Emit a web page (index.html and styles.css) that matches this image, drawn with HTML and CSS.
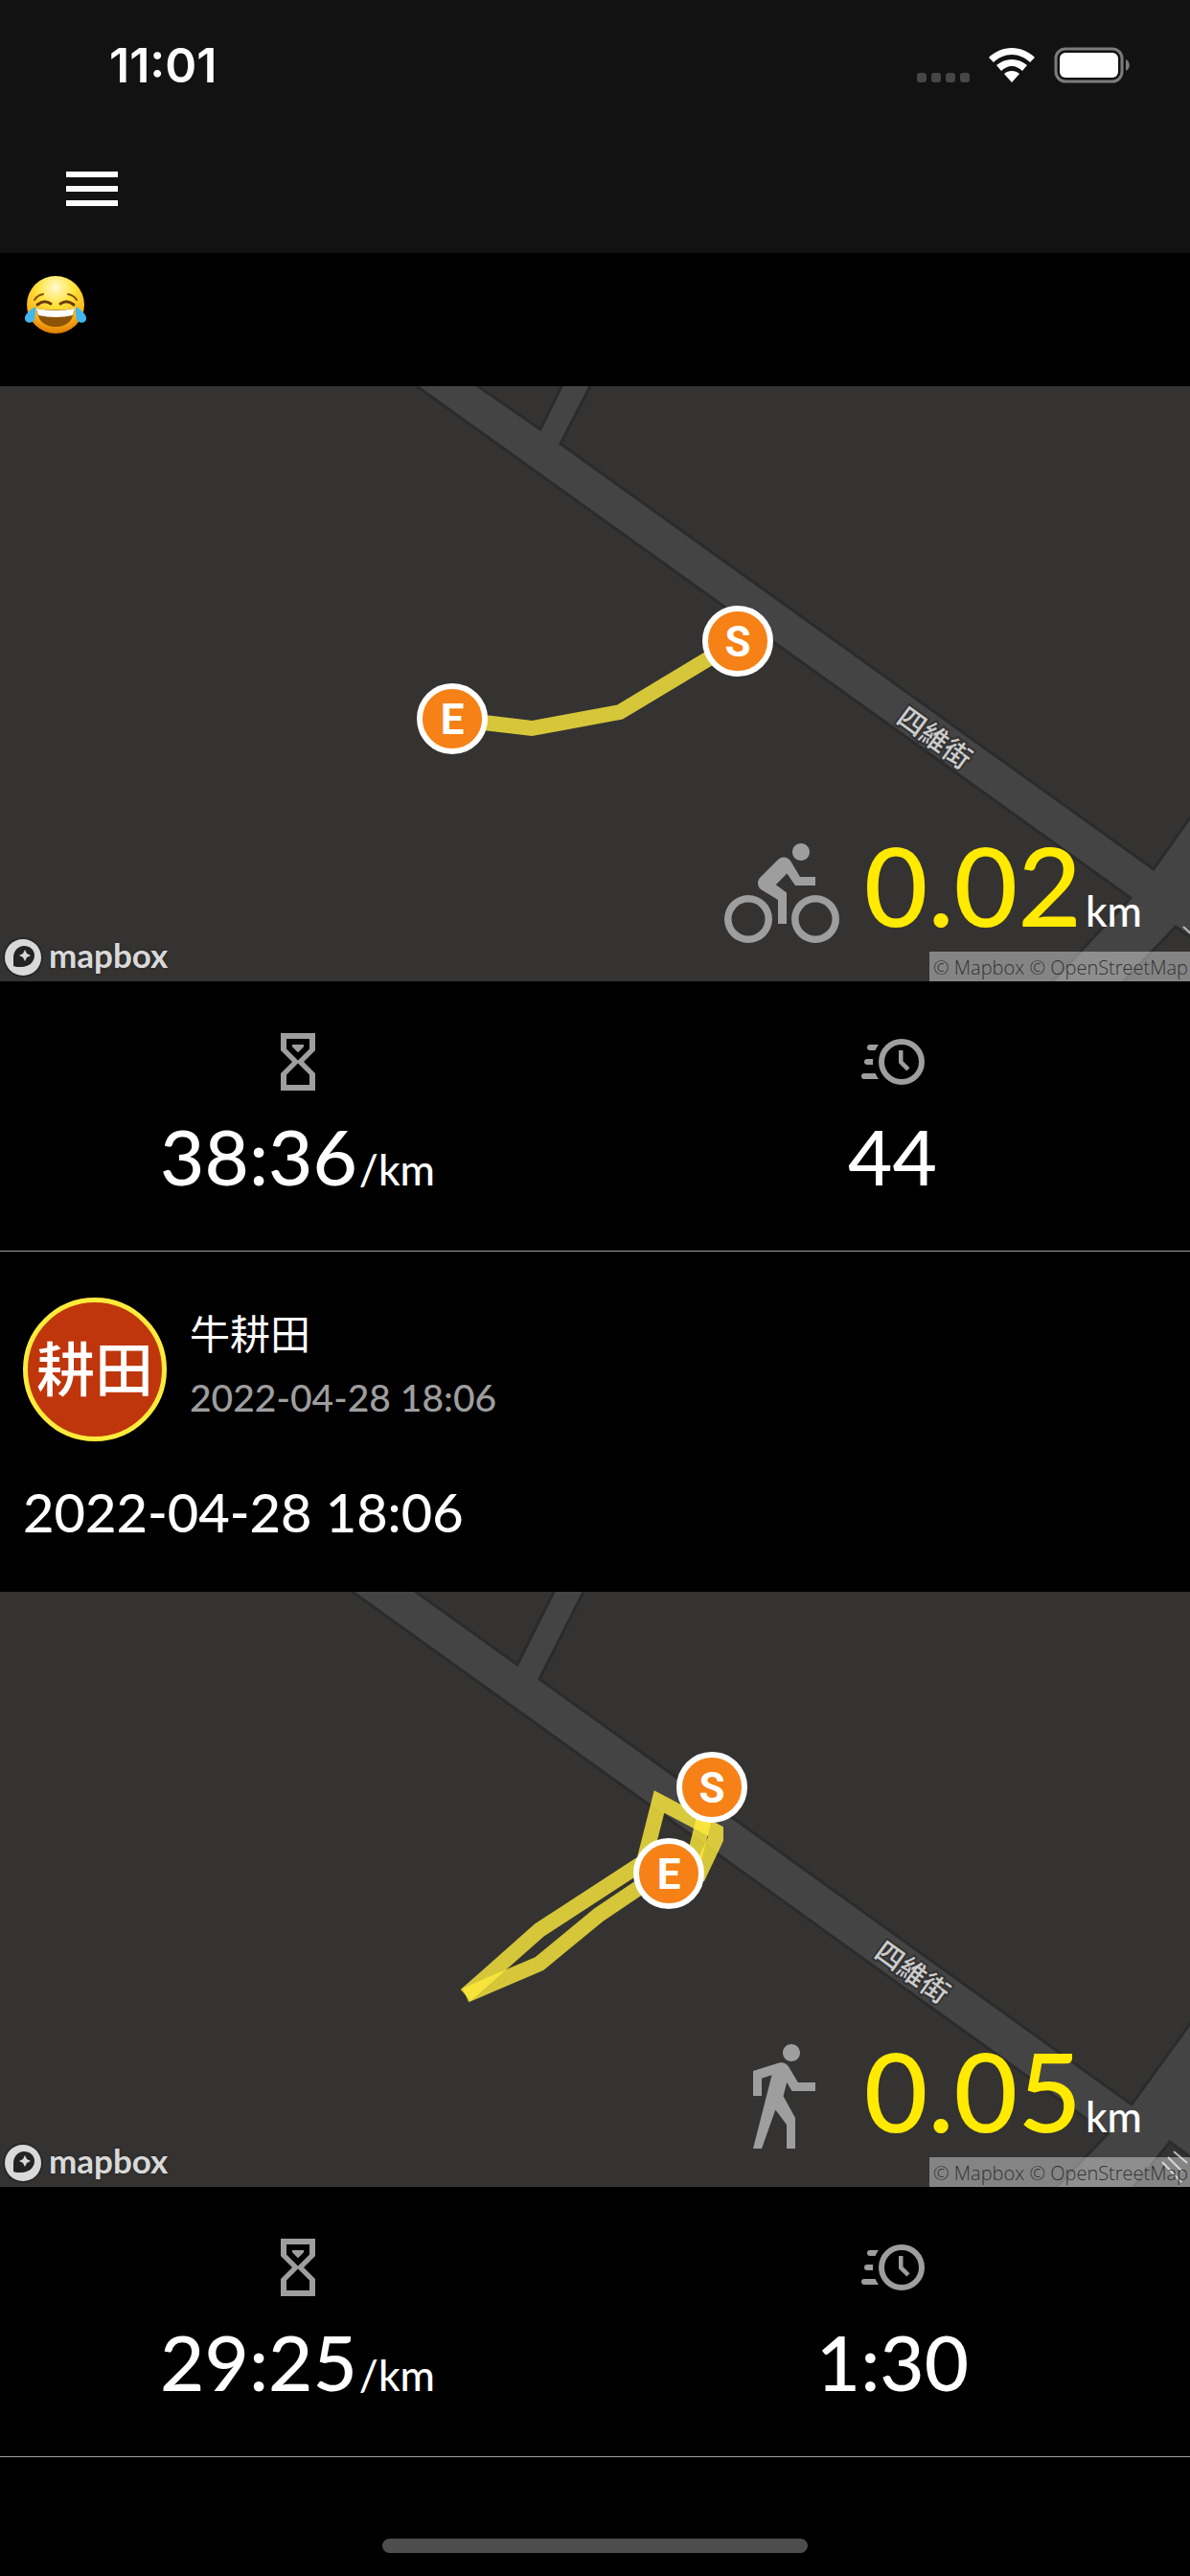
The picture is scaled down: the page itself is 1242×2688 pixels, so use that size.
FILE: index.html
```
<!DOCTYPE html>
<html lang="zh-Hant">
<head>
    <meta charset="UTF-8">
    <meta name="viewport" content="width=device-width, initial-scale=1.0">
    <title>Activities</title>
    <link rel="stylesheet" href="styles.css">
</head>
<body>

<!-- Shared icons -->
<svg class="sprite" aria-hidden="true">
    <symbol id="icon-pace" viewBox="0 0 24 24">
        <path d="M6,2H18V8L14,12L18,16V22H6V16L10,12L6,8V2M16,16.5L12,12.5L8,16.5V20H16V16.5M12,11.5L16,7.5V4H8V7.5L12,11.5M10,6H14V6.75L12,8.75L10,6.75V6Z"/>
    </symbol>
    <symbol id="icon-duration" viewBox="0 0 24 24">
        <path d="M15,4A8,8 0 0,1 23,12A8,8 0 0,1 15,20A8,8 0 0,1 7,12A8,8 0 0,1 15,4M15,6A6,6 0 0,0 9,12A6,6 0 0,0 15,18A6,6 0 0,0 21,12A6,6 0 0,0 15,6M14,8H15.5V11.78L17.83,14.11L16.77,15.17L14,12.4V8M2,18A1,1 0 0,1 1,17A1,1 0 0,1 2,16H5.83C6.14,16.71 6.54,17.38 7,18H2M3,13A1,1 0 0,1 2,12A1,1 0 0,1 3,11H5.05L5,12L5.05,13H3M4,8A1,1 0 0,1 3,7A1,1 0 0,1 4,6H7C6.54,6.62 6.14,7.29 5.83,8H4Z"/>
    </symbol>
    <symbol id="icon-mapbox" viewBox="0 0 44 44">
        <circle cx="22" cy="22" r="21" fill="#282828"/>
        <circle cx="22" cy="22" r="19" fill="#d9d9d9"/>
        <path d="M12 31V22C12 15 17 10 23 10C29 10 34 14 34 20C34 27 28 32 20 32C17 32 14 32 12 31Z" fill="#232323"/>
        <path d="M24 14L26 18L30 20L26 22L24 26L22 22L18 20L22 18Z" fill="#d9d9d9"/>
    </symbol>
</svg>

<header class="header">
    <div class="status-bar">
        <span class="clock">11:01</span>
        <div class="status-icons">
            <div class="signal"><i></i><i></i><i></i><i></i></div>
            <svg class="wifi" viewBox="0 0 48 36">
                <path d="M24 0C33 0 42 4 48 10L43 15C38 10 31 7 24 7C17 7 10 10 5 15L0 10C6 4 15 0 24 0Z"/>
                <path d="M24 12C30 12 35 14 40 18L35 24C32 21 28 19 24 19C20 19 16 21 13 24L8 18C13 14 18 12 24 12Z"/>
                <path d="M24 24C27 24 30 25 32 27L24 36L16 27C18 25 21 24 24 24Z"/>
            </svg>
            <svg class="battery" viewBox="0 0 80 38">
                <rect x="2" y="2" width="69" height="34" rx="10" fill="none" stroke="#7c7c7c" stroke-width="3"/>
                <rect x="6" y="6" width="61" height="26" rx="6" fill="#fff"/>
                <path d="M75 13C80 15 80 23 75 25Z" fill="#7c7c7c"/>
            </svg>
        </div>
    </div>
    <nav class="toolbar">
        <button class="menu-button" aria-label="Menu">
            <svg viewBox="0 0 24 24"><path d="M3,6H21V8H3V6M3,11H21V13H3V11M3,16H21V18H3V16Z"/></svg>
        </button>
    </nav>
</header>

<main>
    <!-- Ride -->
    <article class="activity">
        <div class="caption">
            <svg class="emoji" viewBox="0 0 66 62" role="img" aria-label="Tears of joy">
                <defs>
                    <radialGradient id="face" cx="50%" cy="20%" r="80%">
                        <stop offset="0" stop-color="#fffad0"/>
                        <stop offset="0.4" stop-color="#ffe23a"/>
                        <stop offset="0.75" stop-color="#fbb51a"/>
                        <stop offset="1" stop-color="#dd7b05"/>
                    </radialGradient>
                </defs>
                <circle cx="33" cy="31" r="30" fill="url(#face)"/>
                <path d="M11 26Q14 21 20 20M55 26Q52 21 46 20" fill="none" stroke="#8a4b08" stroke-width="2" stroke-linecap="round"/>
                <path d="M14 31Q21 25 28 30M38 30Q45 25 52 31" fill="none" stroke="#6b3a06" stroke-width="3" stroke-linecap="round"/>
                <path d="M13 35Q33 38 53 35Q51 54 33 54Q15 54 13 35Z" fill="#8d5407"/>
                <path d="M13 35Q33 39 53 35L51 42Q33 46 15 42Z" fill="#fff"/>
                <path d="M12 33C6 36 0 42 1 46C2 51 9 51 11 46C12 42 12 38 12 33ZM54 33C60 36 66 42 65 46C64 51 57 51 55 46C54 42 54 38 54 33Z" fill="#42b7ef"/>
            </svg>
        </div>
        <div class="map">
            <svg class="map-canvas" viewBox="0 0 1242 621">
                <path class="road" d="M421 -10L485 -10L499 0L564 45L591 -10L621 -10L585 60L1204 504L1252 436V582L1227 564L1163 631H1089L1180 534Z"/>
                <text class="street" transform="translate(976 366) rotate(36)">四維街</text>
                <path class="street-mark" d="M1235 564L1246 574"/>
                <polyline class="track" points="472,347 555,357 647,340 770,266"/>
                <g class="marker" transform="translate(770 266)"><circle r="34"/><text y="16">S</text></g>
                <g class="marker" transform="translate(472 347)"><circle r="34"/><text y="16">E</text></g>
            </svg>
            <a class="map-logo" href="#"><svg><use href="#icon-mapbox"/></svg>mapbox</a>
            <div class="distance">
                <svg viewBox="0 0 24 24"><path d="M5,20.5A3.5,3.5 0 0,1 1.5,17A3.5,3.5 0 0,1 5,13.5A3.5,3.5 0 0,1 8.5,17A3.5,3.5 0 0,1 5,20.5M5,12A5,5 0 0,0 0,17A5,5 0 0,0 5,22A5,5 0 0,0 10,17A5,5 0 0,0 5,12M14.8,10H19V8.2H15.8L13.86,4.93C13.57,4.43 13,4.1 12.4,4.1C11.93,4.1 11.5,4.29 11.2,4.6L7.5,8.29C7.19,8.6 7,9 7,9.5C7,10.13 7.33,10.66 7.85,10.97L11.2,13V18H13V11.5L10.75,9.85L13.07,7.5M19,20.5A3.5,3.5 0 0,1 15.5,17A3.5,3.5 0 0,1 19,13.5A3.5,3.5 0 0,1 22.5,17A3.5,3.5 0 0,1 19,20.5M19,12A5,5 0 0,0 14,17A5,5 0 0,0 19,22A5,5 0 0,0 24,17A5,5 0 0,0 19,12M16,4.8C17,4.8 17.8,4 17.8,3C17.8,2 17,1.2 16,1.2C15,1.2 14.2,2 14.2,3C14.2,4 15,4.8 16,4.8Z"/></svg>
                <p><strong>0.02</strong><small>km</small></p>
            </div>
            <div class="attribution"><a href="#">© Mapbox</a> <a href="#">© OpenStreetMap</a></div>
        </div>
        <div class="stats">
            <div class="stat">
                <svg><use href="#icon-pace"/></svg>
                <p>38:36<small>/km</small></p>
            </div>
            <div class="stat">
                <svg><use href="#icon-duration"/></svg>
                <p>44</p>
            </div>
        </div>
    </article>

    <!-- Walk -->
    <article class="activity">
        <div class="author">
            <div class="avatar">耕田</div>
            <div class="author-info">
                <span class="author-name">牛耕田</span>
                <time class="author-time">2022-04-28 18:06</time>
            </div>
        </div>
        <h2 class="title">2022-04-28 18:06</h2>
        <div class="map">
            <svg class="map-canvas" viewBox="0 0 1242 621">
                <path class="road" d="M354 -10L420 -10L434 0L540 76L583 -10L614 -10L563 91L1181 535L1252 437V597L1221 574L1175 631H1093L1156 566Z"/>
                <text class="street" transform="translate(953 396) rotate(36)">四維街</text>
                <path class="street-mark" d="M1225 584L1239 596M1219 590L1234 605M1213 595L1233 616"/>
                <polyline class="track" points="743,204 725,276 698,294 668,308 625,337 563,388 486,421"/>
                <polyline class="track" points="486,421 563,353 672,282 688,219 747,250 747,258 730,294 698,294"/>
                <g class="marker" transform="translate(743 204)"><circle r="34"/><text y="16">S</text></g>
                <g class="marker" transform="translate(698 294)"><circle r="34"/><text y="16">E</text></g>
            </svg>
            <a class="map-logo" href="#"><svg><use href="#icon-mapbox"/></svg>mapbox</a>
            <div class="distance">
                <svg viewBox="0 0 24 24"><path d="M14.12,10H19V8.2H15.38L13.38,4.87C13.08,4.37 12.54,4.03 11.92,4.03C11.74,4.03 11.58,4.06 11.42,4.11L6,5.8V11H7.8V7.33L9.91,6.67L6,22H7.8L10.67,13.89L13,17V22H14.8V15.59L12.31,11.05L13.04,8.18M14,3.8C15,3.8 15.8,3 15.8,2C15.8,1 15,0.2 14,0.2C13,0.2 12.2,1 12.2,2C12.2,3 13,3.8 14,3.8Z"/></svg>
                <p><strong>0.05</strong><small>km</small></p>
            </div>
            <div class="attribution"><a href="#">© Mapbox</a> <a href="#">© OpenStreetMap</a></div>
        </div>
        <div class="stats">
            <div class="stat">
                <svg><use href="#icon-pace"/></svg>
                <p>29:25<small>/km</small></p>
            </div>
            <div class="stat">
                <svg><use href="#icon-duration"/></svg>
                <p>1:30</p>
            </div>
        </div>
    </article>
</main>

<footer class="home-bar"><div class="home-indicator"></div></footer>

</body>
</html>
```
FILE: styles.css
```
/* General reset */
* {
    margin: 0;
    padding: 0;
    box-sizing: border-box;
}

body {
    display: flex;
    flex-direction: column;
    min-height: 100vh;
    background-color: #000;
    color: #fff;
    font-family: Lato, "Noto Sans CJK TC", sans-serif;
    font-weight: 500;
}

svg {
    display: block;
    fill: currentColor;
}

a {
    color: inherit;
    text-decoration: none;
}

.sprite {
    position: absolute;
    width: 0;
    height: 0;
}

/* Header */
.header {
    background-color: #121212;
}

.status-bar {
    display: flex;
    justify-content: space-between;
    align-items: center;
    height: 132px;
    padding: 4px 62px 0 114px;
}

.clock {
    font-family: Inter, sans-serif;
    font-size: 50px;
    font-weight: 600;
}

.status-icons {
    display: flex;
    align-items: center;
    gap: 20px;
}

.signal {
    display: flex;
    align-self: flex-end;
    gap: 5px;
    padding-bottom: 1px;
}

.signal i {
    width: 10px;
    height: 10px;
    border-radius: 3px;
    background-color: #464646;
}

.wifi {
    width: 48px;
    height: 36px;
}

.battery {
    width: 80px;
    height: 38px;
}

.toolbar {
    height: 132px;
    padding: 29px 60px;
}

.menu-button {
    width: 72px;
    height: 72px;
    border: none;
    background: none;
    color: #fff;
    cursor: pointer;
}

/* Activity card */
.activity {
    border-bottom: 1px solid #9e9e9e;
}

.caption {
    height: 139px;
    padding: 23px 25px;
}

.emoji {
    width: 66px;
    height: 62px;
}

.author {
    display: flex;
    align-items: center;
    gap: 24px;
    padding: 48px 24px 38px;
}

.avatar {
    display: flex;
    align-items: center;
    justify-content: center;
    width: 150px;
    height: 150px;
    border: 5px solid #ffeb3b;
    border-radius: 50%;
    background-color: #bf360c;
    font-size: 61px;
    line-height: 64px;
    white-space: nowrap;
}

.author-info {
    display: flex;
    flex-direction: column;
    gap: 6px;
    padding-bottom: 8px;
}

.author-name {
    font-size: 42px;
    font-weight: 400;
    line-height: 60px;
}

.author-time {
    color: #9e9e9e;
    font-size: 39px;
    line-height: 60px;
}

.title {
    padding: 0 24px 47px;
    font-size: 56px;
    font-weight: 500;
    line-height: 72px;
}

/* Map */
.map {
    position: relative;
    overflow: hidden;
    background-color: #343332;
}

.map-canvas {
    width: 100%;
    height: auto;
}

.road {
    fill: #444;
    stroke: #2b2b2b;
    stroke-width: 3px;
}

.street {
    fill: #ccc;
    stroke: #333;
    stroke-width: 4px;
    paint-order: stroke;
    font-size: 29px;
    text-anchor: middle;
    dominant-baseline: central;
}

.street-mark {
    stroke: #bbb;
    stroke-width: 2px;
}

.track {
    fill: none;
    stroke: #ffeb3b;
    stroke-opacity: 0.8;
    stroke-width: 16px;
}

.marker circle {
    fill: #f68116;
    stroke: #fff;
    stroke-width: 6px;
}

.marker text {
    fill: #fff;
    font-family: Roboto, sans-serif;
    font-size: 44px;
    font-weight: 700;
    text-anchor: middle;
}

.map-logo {
    position: absolute;
    left: 2px;
    bottom: 3px;
    display: flex;
    align-items: flex-start;
    gap: 5px;
    color: #d9d9d9;
    font-size: 35px;
    font-weight: 700;
    line-height: 38px;
    text-shadow: 0 0 3px #222;
}

.map-logo svg {
    width: 44px;
    height: 44px;
}

.distance {
    position: absolute;
    right: 50px;
    bottom: 30px;
    display: flex;
    align-items: center;
    gap: 26px;
}

.distance svg {
    width: 120px;
    height: 120px;
    color: #9e9e9e;
}

.distance p {
    padding-bottom: 20px;
    font-size: 115px;
    line-height: 90px;
}

.distance strong {
    color: #ffea00;
    font-weight: 500;
}

.distance small {
    margin-left: 4px;
    font-size: 44px;
    line-height: 44px;
}

.attribution {
    position: absolute;
    right: 0;
    bottom: 0;
    height: 31px;
    padding: 0 2px 0 4px;
    background-color: rgba(255, 255, 255, 0.4);
    color: #333;
    font-family: "Open Sans", sans-serif;
    font-size: 20px;
    font-weight: 300;
    line-height: 33px;
    white-space: nowrap;
}

/* Stats */
.stats {
    display: grid;
    grid-template-columns: 1fr 1fr;
    padding: 48px 0 55px;
}

.stat {
    display: flex;
    flex-direction: column;
    align-items: center;
    gap: 18px;
}

.stat svg {
    width: 72px;
    height: 72px;
    color: #9e9e9e;
}

.stat p {
    font-size: 80px;
    line-height: 88px;
}

.stat small {
    margin-left: 2px;
    font-size: 44px;
    line-height: 44px;
}

/* Home indicator */
.home-bar {
    margin-top: auto;
    padding: 24px;
}

.home-indicator {
    width: 444px;
    height: 15px;
    margin: 0 auto;
    border-radius: 8px;
    background-color: #4d4d4d;
}
```
